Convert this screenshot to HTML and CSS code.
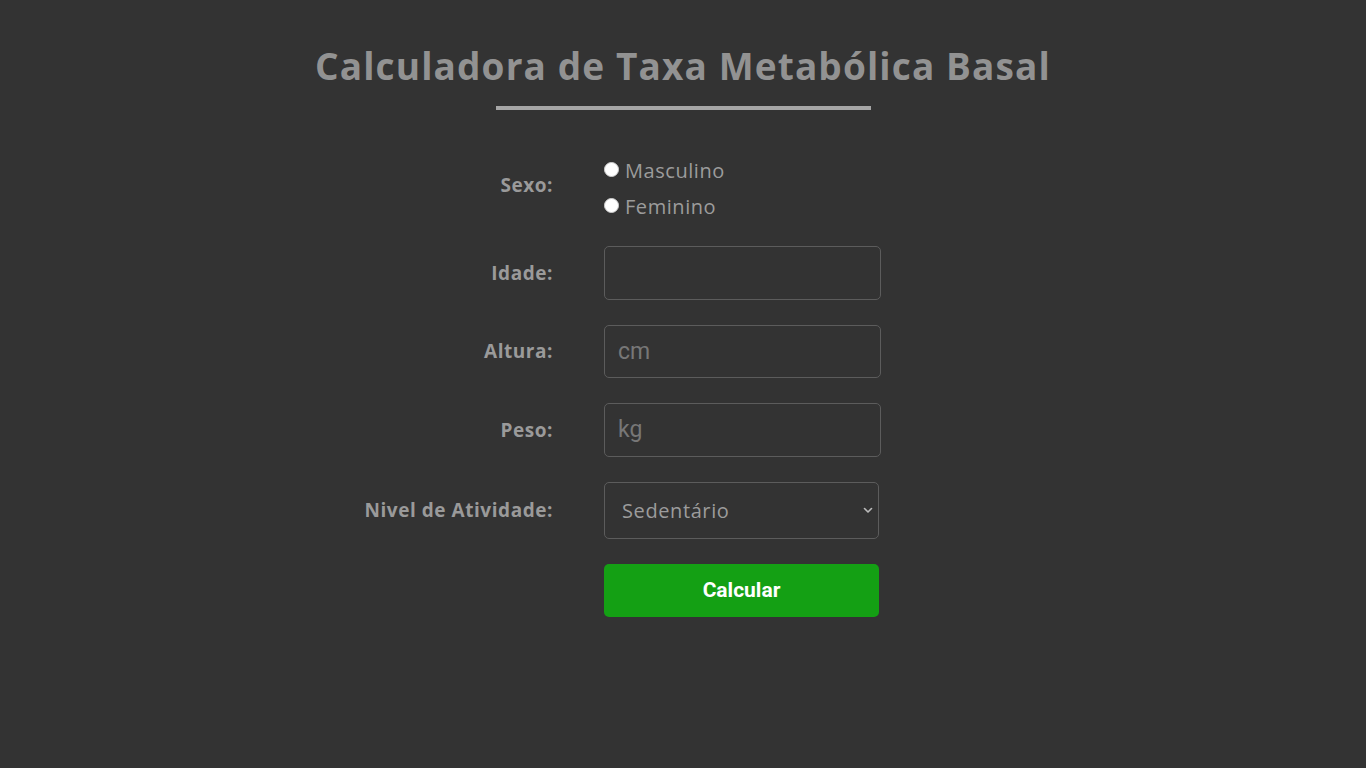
FILE: index.html
```html
<!DOCTYPE html>
<html lang="pt-BR">
<head>
<meta charset="utf-8">
<title>Calculadora de Taxa Metabólica Basal</title>
<link rel="stylesheet" href="styles.css">
</head>
<body>
<main class="page">
  <h1 class="title">Calculadora de Taxa Metabólica Basal</h1>
  <div class="rule"></div>
  <form class="form">
    <span class="label label-sexo">Sexo:</span>
    <div class="radios">
      <label class="radio-item"><input type="radio" name="sexo" class="radio"><span>Masculino</span></label>
      <label class="radio-item"><input type="radio" name="sexo" class="radio"><span>Feminino</span></label>
    </div>

    <label class="label" for="idade">Idade:</label>
    <input id="idade" class="field" type="number">

    <label class="label" for="altura">Altura:</label>
    <input id="altura" class="field" type="number" placeholder="cm">

    <label class="label" for="peso">Peso:</label>
    <input id="peso" class="field" type="number" placeholder="kg">

    <label class="label" for="nivel">Nivel de Atividade:</label>
    <div class="select-wrap">
      <select id="nivel" class="select">
        <option>Sedentário</option>
        <option>Levemente ativo</option>
        <option>Moderadamente ativo</option>
        <option>Muito ativo</option>
        <option>Extremamente ativo</option>
      </select>
      <svg class="chevron" width="10" height="7" viewBox="0 0 10 7"><path d="M1.5 1.5 L5 5 L8.5 1.5" fill="none" stroke="#bbbbbb" stroke-width="1.6" stroke-linecap="round" stroke-linejoin="round"/></svg>
    </div>

    <span class="spacer"></span>
    <button type="button" class="button">Calcular</button>
  </form>
</main>
</body>
</html>
```
FILE: styles.css
```css
html, body {
  margin: 0;
  padding: 0;
  background: #333333;
}

body {
  font-family: "Open Sans", "DejaVu Sans", sans-serif;
  color: #999999;
}

.page {
  display: flex;
  flex-direction: column;
  align-items: center;
  padding-top: 40px;
}

.title {
  margin: 0;
  font-family: "Open Sans", sans-serif;
  font-weight: 700;
  font-size: 37px;
  line-height: 52px;
  color: #929292;
  letter-spacing: 1.12px;
}

.rule {
  width: 375px;
  height: 4px;
  background: #a6a6a6;
  margin-top: 14px;
}

.form {
  display: grid;
  grid-template-columns: 250px 277px;
  column-gap: 51px;
  row-gap: 25px;
  align-items: center;
  margin-top: 48px;
  padding-right: 182px;
}

.label {
  text-align: right;
  font-weight: 700;
  font-size: 19px;
  letter-spacing: 0.55px;
  color: #9a9a9a;
}

.label-sexo {
  margin-bottom: 10px;
}

.radios {
  display: flex;
  flex-direction: column;
  gap: 10px;
  margin-bottom: 1px;
}

.radio-item {
  display: flex;
  align-items: center;
  font-size: 20px;
  line-height: 26px;
  letter-spacing: 0.55px;
  color: #9c9c9c;
}

.radio {
  appearance: none;
  -webkit-appearance: none;
  width: 15px;
  height: 15px;
  margin: 0 6px 3px 0;
  border-radius: 50%;
  background: #ffffff;
  border: 1px solid #d0d0d0;
  box-sizing: border-box;
}

.field {
  box-sizing: border-box;
  width: 277px;
  height: 53.5px;
  margin: 0;
  padding: 0 13px;
  background: #333333;
  border: 1px solid #5c5c5c;
  border-radius: 5px;
  font-family: Roboto, sans-serif;
  font-size: 23px;
  color: #aaaaaa;
  outline: none;
}

.field::placeholder {
  color: #777777;
}

.field::-webkit-outer-spin-button,
.field::-webkit-inner-spin-button {
  -webkit-appearance: none;
  margin: 0;
}

.select-wrap {
  position: relative;
  width: 275px;
}

.select {
  appearance: none;
  -webkit-appearance: none;
  box-sizing: border-box;
  width: 275px;
  height: 57px;
  margin: 0;
  padding: 0 17px;
  background: #333333;
  border: 1px solid #5c5c5c;
  border-radius: 5px;
  font-family: "Open Sans", sans-serif;
  font-size: 20px;
  letter-spacing: 0.6px;
  color: #9c9c9c;
  outline: none;
}

.chevron {
  position: absolute;
  right: 6px;
  top: 25px;
  pointer-events: none;
}

.button {
  box-sizing: border-box;
  width: 275px;
  height: 53px;
  margin: 0;
  border: none;
  border-radius: 5px;
  background: #14a014;
  color: #ffffff;
  font-family: Roboto, sans-serif;
  font-weight: 700;
  font-size: 21px;
  cursor: pointer;
}
```
